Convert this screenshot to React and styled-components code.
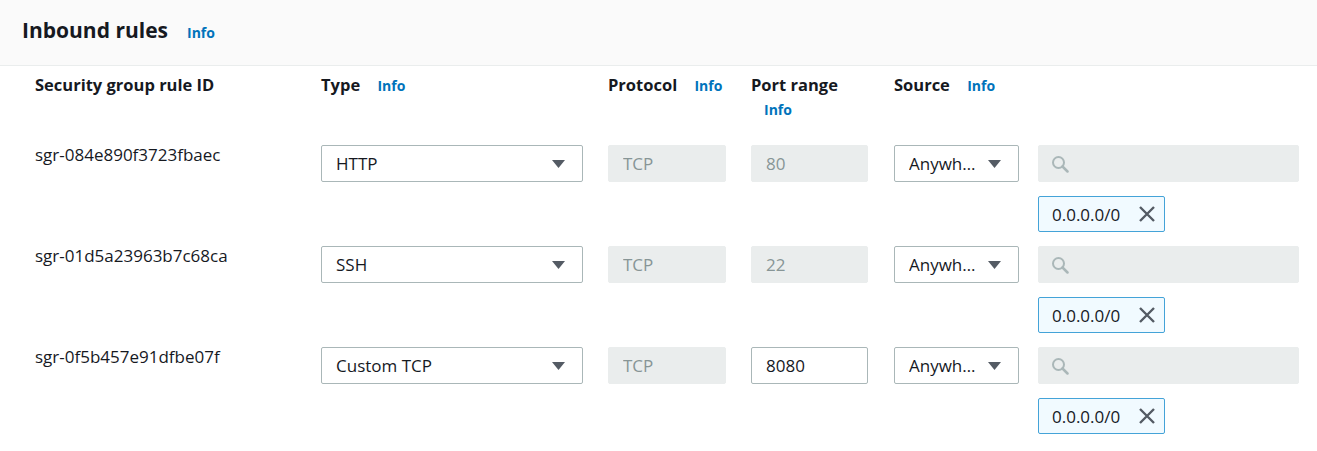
import React from "react";
import styled, { createGlobalStyle } from "styled-components";

const colors = {
  text: "#16191f",
  link: "#0073bb",
  border: "#aab7b8",
  disabledBg: "#eaeded",
  disabledText: "#879596",
  headerBg: "#fafafa",
  divider: "#eaeded",
  icon: "#545b64",
  tokenBg: "#f1faff",
  tokenBorder: "#44a3d8",
};

const GlobalStyle = createGlobalStyle`
  body {
    margin: 0;
    background: #ffffff;
    font-family: "Open Sans", "Noto Sans", sans-serif;
    color: ${colors.text};
  }
`;

const Panel = styled.div`
  width: 1317px;
  height: 451px;
  overflow: hidden;
`;

const Header = styled.div`
  display: flex;
  align-items: baseline;
  gap: 19px;
  height: 66px;
  box-sizing: border-box;
  padding: 15px 22px 0;
  background: ${colors.headerBg};
  border-bottom: 1px solid ${colors.divider};
`;

const Title = styled.h2`
  margin: 0;
  font-size: 21px;
  font-weight: 700;
  line-height: 30px;
`;

const Info = styled.a`
  color: ${colors.link};
  font-size: 14px;
  font-weight: 700;
  text-decoration: none;
  margin-left: ${(p) => (p.$inline ? "13px" : "0")};
`;

const Table = styled.div`
  padding: 7px 0 0 35px;
`;

const Grid = styled.div`
  display: grid;
  grid-template-columns: 286px 287px 143px 143px 144px 261px;
`;

const HeadCell = styled.div`
  font-size: 16.5px;
  font-weight: 700;
  line-height: 24px;
  padding-right: 18px;
`;

const Row = styled(Grid)`
  margin-top: ${(p) => (p.$first ? "23px" : "14px")};
  height: 87px;
`;

const IdCell = styled.div`
  font-size: 17px;
  line-height: 20px;
`;

const Field = styled.div`
  width: ${(p) => p.$width}px;
  height: 37px;
  box-sizing: border-box;
  display: flex;
  align-items: center;
  padding: 0 17px 0 14px;
  border-radius: 2px;
  font-size: 17px;
  border: 1px solid ${(p) => (p.$disabled ? colors.disabledBg : colors.border)};
  background: ${(p) => (p.$disabled ? colors.disabledBg : "#ffffff")};
  color: ${(p) => (p.$disabled ? colors.disabledText : colors.text)};
`;

const FieldText = styled.span`
  flex: 1;
  white-space: nowrap;
  overflow: hidden;
`;

const Caret = styled.svg`
  width: 13px;
  height: 8px;
  flex: none;
`;

const SourceCol = styled.div`
  display: flex;
  flex-direction: column;
  gap: 14px;
`;

const Search = styled(Field)`
  padding-left: 12px;
`;

const Token = styled.div`
  width: 127px;
  height: 36px;
  box-sizing: border-box;
  display: flex;
  align-items: center;
  justify-content: space-between;
  padding: 0 8px 0 13px;
  background: ${colors.tokenBg};
  border: 1px solid ${colors.tokenBorder};
  border-radius: 2px;
  font-size: 17px;
`;

const DownCaret = () => (
  <Caret viewBox="0 0 13 8">
    <path d="M0 0h13L6.5 8z" fill={colors.icon} />
  </Caret>
);

const SearchIcon = () => (
  <svg width="18" height="18" viewBox="0 0 18 18">
    <circle cx="7.5" cy="7.5" r="5.5" fill="none" stroke={colors.border} strokeWidth="2" />
    <path d="M11.5 11.5l5 5" stroke={colors.border} strokeWidth="2.5" strokeLinecap="round" />
  </svg>
);

const CloseIcon = () => (
  <svg width="18" height="18" viewBox="0 0 18 18">
    <path d="M2 2l14 14M16 2L2 16" stroke={colors.icon} strokeWidth="2.4" />
  </svg>
);

const rules = [
  { id: "sgr-084e890f3723fbaec", type: "HTTP", port: "80", editable: false },
  { id: "sgr-01d5a23963b7c68ca", type: "SSH", port: "22", editable: false },
  { id: "sgr-0f5b457e91dfbe07f", type: "Custom TCP", port: "8080", editable: true },
];

export default function App() {
  return (
    <Panel>
      <GlobalStyle />
      <Header>
        <Title>Inbound rules</Title>
        <Info href="#">Info</Info>
      </Header>
      <Table>
        <Grid>
          <HeadCell>Security group rule ID</HeadCell>
          <HeadCell>
            Type <Info $inline href="#">Info</Info>
          </HeadCell>
          <HeadCell>
            Protocol <Info $inline href="#">Info</Info>
          </HeadCell>
          <HeadCell>
            Port range <Info $inline href="#">Info</Info>
          </HeadCell>
          <HeadCell>
            Source <Info $inline href="#">Info</Info>
          </HeadCell>
          <HeadCell />
        </Grid>
        {rules.map((rule, i) => (
          <Row key={rule.id} $first={i === 0}>
            <IdCell>{rule.id}</IdCell>
            <div>
              <Field $width={262}>
                <FieldText>{rule.type}</FieldText>
                <DownCaret />
              </Field>
            </div>
            <div>
              <Field $width={118} $disabled>
                <FieldText>TCP</FieldText>
              </Field>
            </div>
            <div>
              <Field $width={117} $disabled={!rule.editable}>
                <FieldText>{rule.port}</FieldText>
              </Field>
            </div>
            <div>
              <Field $width={125}>
                <FieldText>Anywh…</FieldText>
                <DownCaret />
              </Field>
            </div>
            <SourceCol>
              <Search $width={261} $disabled>
                <SearchIcon />
              </Search>
              <Token>
                <span>0.0.0.0/0</span>
                <CloseIcon />
              </Token>
            </SourceCol>
          </Row>
        ))}
      </Table>
    </Panel>
  );
}
